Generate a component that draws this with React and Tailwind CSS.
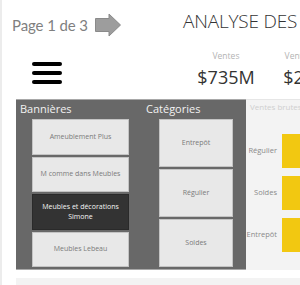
import React from "react";

const banners = [
  { label: "Ameublement Plus" },
  { label: "M comme dans Meubles" },
  { label: "Meubles et décorations Simone", selected: true },
  { label: "Meubles Lebeau" },
];

const categories = ["Entrepôt", "Régulier", "Soldes"];

const bars = [
  { label: "Régulier" },
  { label: "Soldes" },
  { label: "Entrepôt" },
];

function Tile({ label, selected, className }) {
  return (
    <div
      className={
        (selected
          ? "bg-[#333333] text-[#f5f5f5] border-[#2a2a2a] "
          : "bg-[#e8e8e8] text-[#7a7a7a] border-[#c4c4c4] ") +
        "flex items-center justify-center text-center border px-[6px] text-[7px] leading-[10px] " +
        className
      }
    >
      {label}
    </div>
  );
}

export default function App() {
  return (
    <div className="w-[300px] h-[285px] overflow-hidden bg-white flex font-['Open_Sans',sans-serif]">
      {/* bande gauche */}
      <div className="w-[2px] shrink-0 bg-[#ececec]" />

      <div className="flex-1 flex flex-col min-w-0">
        {/* en-tête */}
        <div className="h-[99px] flex shrink-0">
          <div className="w-[181px] shrink-0 flex flex-col">
            <div className="flex items-center h-[24px] mt-[13px] pl-[10px]">
              <span className="font-['Lato',sans-serif] text-[15px] text-[#7f7f7f] leading-[24px] tracking-[-0.1px]">
                Page 1 de 3
              </span>
              <svg width="26" height="24" viewBox="0 0 26 24" className="ml-[7px]">
                <path
                  d="M0.5 5.5 H14 V1 L25.5 12 L14 23 V18.5 H0.5 Z"
                  fill="#9d9d9d"
                  stroke="#8a8a8a"
                  strokeWidth="1"
                />
              </svg>
            </div>
            <div className="mt-[25px] ml-[30px] flex flex-col gap-[5px]">
              <div className="w-[30px] h-[4px] rounded-full bg-black" />
              <div className="w-[30px] h-[4px] rounded-full bg-black" />
              <div className="w-[30px] h-[4px] rounded-full bg-black" />
            </div>
          </div>

          <div className="flex-1 flex flex-col min-w-0">
            <div className="mt-[8px] h-[26px] text-[19px] leading-[26px] font-light tracking-[-0.2px] text-[#333333] whitespace-nowrap">
              ANALYSE DES
            </div>
            <div className="mt-[16px] flex">
              <div className="w-[86px] shrink-0 flex flex-col items-center">
                <span className="text-[8.5px] leading-[12px] text-[#b3b3b3]">Ventes</span>
                <span className="mt-[3px] text-[18px] leading-[24px] text-[#333333]">$735M</span>
              </div>
              <div className="w-[86px] shrink-0 flex flex-col items-center">
                <span className="text-[8.5px] leading-[12px] text-[#b3b3b3] whitespace-nowrap">Ventes brutes</span>
                <span className="mt-[3px] text-[18px] leading-[24px] text-[#333333]">$226M</span>
              </div>
            </div>
          </div>
        </div>

        {/* segments + graphique */}
        <div className="h-[171px] flex pl-[14px] shrink-0">
          <div className="w-[230px] shrink-0 bg-[#686868] border-t border-b border-[#a8a8a8] flex">
            <div className="w-[130px] shrink-0 flex flex-col">
              <div className="pt-[2px] pl-[4px] text-[11px] leading-[14px] text-[#f2f2f2]">Bannières</div>
              <div className="mt-[3px] ml-[16px] w-[97px] flex flex-col gap-[2px]">
                {banners.map((b) => (
                  <Tile key={b.label} label={b.label} selected={b.selected} className="h-[35.5px]" />
                ))}
              </div>
            </div>
            <div className="flex-1 flex flex-col">
              <div className="pt-[2px] text-[11px] leading-[14px] text-[#f2f2f2]">Catégories</div>
              <div className="mt-[3px] ml-[13px] w-[74px] flex flex-col gap-[2px]">
                {categories.map((c) => (
                  <Tile key={c} label={c} className="h-[48px]" />
                ))}
              </div>
            </div>
          </div>

          <div className="flex-1 bg-[#f3f3f3] border-t border-[#e6e6e6] flex flex-col min-w-0">
            <div className="pl-[4px] pt-[1px] text-[8px] leading-[11px] text-[#cfcfcf] whitespace-nowrap">
              Ventes brutes par catégorie
            </div>
            <div className="mt-[22px] flex flex-col gap-[8px]">
              {bars.map((b) => (
                <div key={b.label} className="flex items-center h-[34px]">
                  <span className="w-[31px] shrink-0 text-right text-[7.5px] text-[#8a8a8a]">{b.label}</span>
                  <div className="ml-[5px] flex-1 h-full bg-[#f2c811]" />
                </div>
              ))}
            </div>
          </div>
        </div>

        <div className="mt-[8px] ml-[14px] flex-1 bg-[#f3f3f3]" />
      </div>
    </div>
  );
}
